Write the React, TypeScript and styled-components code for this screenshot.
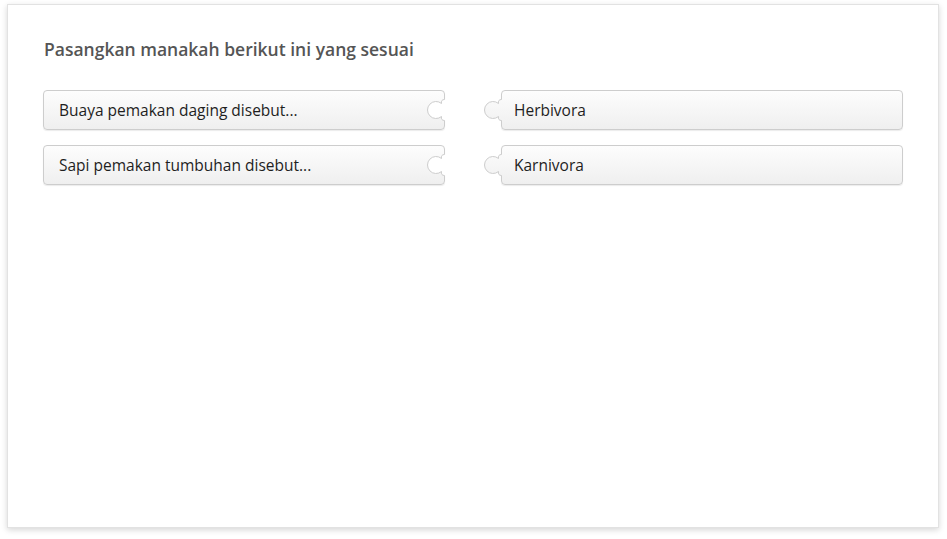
import React from "react";
import styled, { createGlobalStyle } from "styled-components";

const Global = createGlobalStyle`
  html, body { margin: 0; padding: 0; background: #ffffff; }
  body { font-family: "Open Sans", "Noto Sans", sans-serif; }
  #root { padding: 4px 8px 11px 7px; }
`;

const Card = styled.div`
  box-sizing: border-box;
  width: 932px;
  height: 524px;
  background: #fff;
  border: 1px solid #e2e2e2;
  box-shadow: 0 2px 6px rgba(0, 0, 0, 0.16);
  padding: 32px 35px 0 35px;
`;

const Title = styled.h1`
  margin: 0 0 29px 1px;
  font-size: 17.5px;
  line-height: 24px;
  font-weight: 600;
  color: #555555;
`;

const Board = styled.div`
  display: grid;
  grid-template-columns: 402px 402px;
  column-gap: 56px;
  row-gap: 15px;
`;

const Piece = styled.div<{ $side: "left" | "right" }>`
  position: relative;
  box-sizing: border-box;
  height: 40px;
  display: flex;
  align-items: center;
  padding-left: ${(p) => (p.$side === "left" ? "15px" : "12px")};
  border: 1px solid #cdcdcd;
  border-radius: 4px;
  background: linear-gradient(#fdfdfd, #efefef);
  box-shadow: 0 1px 1px rgba(0, 0, 0, 0.08);
  font-size: 15.5px;
  color: #1e1e1e;
`;

const Connector = styled.svg<{ $side: "left" | "right" }>`
  position: absolute;
  top: -1px;
  width: 22px;
  height: 40px;
  overflow: visible;
  ${(p) => (p.$side === "left" ? "right: -3px;" : "left: -20px;")}
`;

const notch =
  "M -0.5 9.5 C -3 9.5 -4 11 -3.5 13.5 A 8.5 8.5 0 1 0 -3.5 26.5 C -4 29 -3 30.5 -0.5 30.5";
const knob =
  "M 0.5 9.5 C -2 9.5 -3 11 -2.5 13.5 A 8.5 8.5 0 1 0 -2.5 26.5 C -3 29 -2 30.5 0.5 30.5";

const Socket: React.FC = () => (
  <Connector $side="left" viewBox="-20 0 22 40">
    <path d={`${notch} L 2 30.5 L 2 9.5 Z`} fill="#ffffff" />
    <path d={notch} fill="none" stroke="#cdcdcd" strokeWidth={1} />
  </Connector>
);

const Knob: React.FC<{ id: string }> = ({ id }) => (
  <Connector $side="right" viewBox="-19 0 22 40">
    <defs>
      <linearGradient id={id} gradientUnits="userSpaceOnUse" x1="0" y1="0" x2="0" y2="40">
        <stop offset="0" stopColor="#fdfdfd" />
        <stop offset="1" stopColor="#efefef" />
      </linearGradient>
    </defs>
    <path d={`${knob} L 3 30.5 L 3 9.5 Z`} fill={`url(#${id})`} />
    <path d={knob} fill="none" stroke="#cdcdcd" strokeWidth={1} />
  </Connector>
);

const rows = [
  { q: "Buaya pemakan daging disebut...", a: "Herbivora" },
  { q: "Sapi pemakan tumbuhan disebut...", a: "Karnivora" },
];

export default function App() {
  return (
    <>
      <Global />
      <Card>
        <Title>Pasangkan manakah berikut ini yang sesuai</Title>
        <Board>
          {rows.map((r, i) => (
            <React.Fragment key={i}>
              <Piece $side="left">
                {r.q}
                <Socket />
              </Piece>
              <Piece $side="right">
                <Knob id={`kg${i}`} />
                {r.a}
              </Piece>
            </React.Fragment>
          ))}
        </Board>
      </Card>
    </>
  );
}
